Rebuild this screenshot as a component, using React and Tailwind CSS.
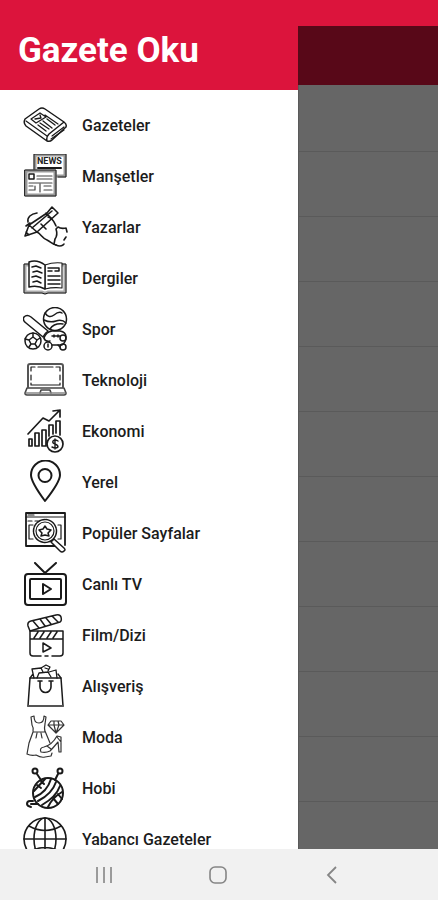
import React from "react";

function Icon({ children, width = 1.5, color = "#1a1a1a" }) {
  return (
    <svg
      viewBox="0 0 45 45"
      className="h-[45px] w-[45px] shrink-0"
      fill="none"
      stroke={color}
      strokeWidth={width}
      strokeLinecap="round"
      strokeLinejoin="round"
      aria-hidden="true"
    >
      {children}
    </svg>
  );
}

const NewspaperIcon = () => (
  <Icon>
    <path d="M24 38 3 23Q0 20 2 16L16 6q3-2 6 0L41 19q3 2 2 5L29 37q-2 2-5 1-1-4 2-7L41 19" />
    <path d="M3 18 24 33M29 33l12-9M28 36l13-9" strokeWidth="1.2" />
    <path d="m17 10-9 6 5 4 10-6zM12 16l6-1-1-3M22 12l13 9M24 16l8 6M20 18l9 7M17 20l9 6M15 22l8 6" strokeWidth="1.3" />
  </Icon>
);

const HeadlinesIcon = () => (
  <Icon>
    <path d="M12 16V1h30v21h-8" stroke="#999" strokeWidth="3" />
    <path d="M11 16V0h32v23h-8" strokeWidth="1" />
    <path d="M15 14h23" strokeWidth="2" />
    <text x="14" y="10" fontSize="9" fontWeight="700" fontFamily="Roboto, sans-serif" fill="#222" stroke="none">NEWS</text>
    <rect x="3" y="17" width="29" height="24" fill="#fff" stroke="#999" strokeWidth="3" />
    <rect x="2" y="16" width="31" height="26" strokeWidth="1" />
    <rect x="6" y="20" width="5" height="5" />
    <path d="M14 22h15M14 25h15M6 29h23M6 32h4M12 32v4H6M17 30v8M21 32h7M21 36h8" stroke="#444" strokeWidth="1.2" />
  </Icon>
);

const WriterIcon = () => (
  <Icon width={1.6}>
    <path d="M14 8C8 9 4 12 5 17M3 21l4-3M25 12c5 1 6 5 8 9M18 19l5 5M14 27c4 2 6 7 10 8 4 2 5 4 9 5" />
    <path d="m2 31 4-11L24 8l5-6 6 6-21 19zM6 20l8 7M9 23 29 6M23 8l6 6M3 27l3 3" />
    <path d="M43 23q-5 1-8-1l-2 2q2 6-1 10l-1 5M43 23l1 4M43 32l-2 3M33 40q4 2 7 0l1-1" />
  </Icon>
);

const BookIcon = () => (
  <Icon>
    <path d="M6 9H2v27h17q3 2 6 0h17V9h-4" stroke="#aaa" strokeWidth="3" />
    <path d="M6 8H1v29h18q3 2 6 0h18V8h-4" strokeWidth="1" />
    <path d="M22 9q8-3 17-2v25q-9-1-17 1z" fill="#fff" strokeWidth="1.1" />
    <path d="M6 6q8-3 16 3v24q-7-4-16-2z" fill="#fff" />
    <path d="m9 11 4-1 5 2M10 16l4-1 5 2M9 21l4-1 5 2M10 26l4-1 4 2M25 12h11v3h-4M25 15h4M25 20h12M25 24h12M25 28h12" />
  </Icon>
);

const SportIcon = () => (
  <Icon width={1.5}>
    <circle cx="32" cy="12" r="11.5" />
    <path d="M22 6q4 6 9 2t8-2M21 13q6 3 12 1t10 2M27 22q4-6 13-5" />
    <path d="M20 30 3 16q-4-3-2-6 3-3 7 0l17 14q-3 2-5 6z" />
    <circle cx="10" cy="34" r="8" />
    <path d="m10 30 4 3-2 4H8l-2-4zM10 26v4M14 33l3-2M12 37l2 3M8 37l-2 3M6 33l-4-1" />
    <path d="M21 31q2-6 8-7h8q6 1 6 6 0 5-4 8H29M29 29h8M31 28v2M35 28v2" />
    <circle cx="40" cy="31" r="3" />
    <circle cx="25" cy="39" r="4" />
    <circle cx="40" cy="40" r="3" />
    <path d="M21 31q1 4 6 3M25 37v3M35 38l2 2" />
  </Icon>
);

const LaptopIcon = () => (
  <Icon>
    <path d="M5 29V8q0-2 2-2h31q2 0 2 2v21" strokeWidth="2" stroke="#555" />
    <path d="M8 13V9h4M15 9h15M33 9h4v4M37 17v5M8 17v5M8 25v2h29v-2" strokeWidth="1.2" />
    <path d="M4 30h37l2 5q0 2-2 2H4q-2 0-2-2zM17 35l1-3h9l1 3" stroke="#444" strokeWidth="1.6" />
    <path d="M3 35h39" stroke="#888" />
  </Icon>
);

const EconomyIcon = () => (
  <Icon width={1.7}>
    <path d="M5 25 20 9l6 3L37 1M30 2l7-1v7" />
    <path d="M6 30h3v7H6zM12 24h4v13h-4zM19 21h4v16h-4zM26 27V16h4v9M33 24V12h4v14" />
    <circle cx="32" cy="35" r="8" fill="#fff" />
    <path d="M35 32q-3-2-5 0-1 2 2 3t3 3q-2 2-6 0M32 30v10" strokeWidth="1.4" />
  </Icon>
);

const PinIcon = () => (
  <Icon width={2}>
    <path d="M22 41Q8 22 8 15a14 14 0 0 1 29 0q0 7-15 26z" />
    <circle cx="22" cy="15.5" r="6.5" />
  </Icon>
);

const PopularIcon = () => (
  <Icon>
    <path d="M32 35H3V2h39v32" strokeWidth="1.8" />
    <path d="M3 6h39M5 4h6M5 10h4M12 10h3M10 14H6v14h4M35 14h3v14h-3" strokeWidth="1.2" />
    <circle cx="22" cy="20" r="11.5" fill="#fff" strokeDasharray="4 1" />
    <circle cx="22" cy="20" r="9" strokeWidth="1.2" />
    <path d="m22 15 2 3 4 1-3 3 1 3-4-1-4 1 1-3-3-3 4-1z" />
    <path d="m28 31 3-3 10 9q2 2 0 3-2 2-4 0z" fill="#fff" />
  </Icon>
);

const TvIcon = () => (
  <Icon width={2}>
    <path d="m12 1 10 10L33 1" />
    <rect x="2" y="12" width="41" height="31" rx="3" />
    <rect x="7" y="17" width="31" height="20" rx="1" />
    <path d="m20 22 8 5-8 5z" />
  </Icon>
);

const FilmIcon = () => (
  <Icon width={1.5}>
    <path d="M7 18 5 13q-1-4 3-5l25-6q4-1 5 2 1 4-1 5L7 18zM10 8l6 7M17 6l5 7M23 5l5 6M29 3l6 6" />
    <path d="M7 18h33v22q0 3-3 3h-8M18 43h-8q-3 0-3-3V18M22 43h3M7 26h33M11 25l4-6M17 25l4-6M24 25l4-6M30 25l4-6" />
    <path d="m20 30 8 5-8 4z" />
  </Icon>
);

const BagIcon = () => (
  <Icon>
    <path d="M7 14h31l2 28H5z" />
    <path d="M5 42h35" strokeWidth="2" stroke="#555" />
    <path d="M17 18v5a5.5 5.5 0 0 0 11 0v-5M15 17h4M26 17h4" strokeWidth="1.6" />
    <path d="m7 14 3-4M38 14l-3-4M11 14l-2-9 9-1 2 4M18 4l5-3 4 2-2 4M14 14l2-5 9-1 3 5M26 8l7-2 1 8M22 4l3 1" strokeWidth="1.3" />
  </Icon>
);

const FashionIcon = () => (
  <Icon width={1.2} color="#333">
    <path d="m8 2 1 8q2 3 1 7L6 28 4 39q4 2 9 1 5 3 9 2l6-1 1-3M8 2l3-1q0 7 5 7t5-7l2 1-1 7q-1 4 0 8M10 17h12M22 16l5 12M14 18l-1 5M18 18l1 5" />
    <path d="M28 6h10l3 4-8 8-8-8zM25 10h16M31 6v4l2 8 3-8-1-4" />
    <path d="M18 37q-2-4 3-5 8-2 13-11l4 1v15h-2l-1-10q-5 6-8 9-4 2-9 1zM24 31l4 3M34 22l4 5" />
  </Icon>
);

const YarnIcon = () => (
  <Icon width={2}>
    <circle cx="25" cy="27" r="15" />
    <circle cx="12" cy="5" r="2.5" />
    <circle cx="37" cy="5" r="2.5" />
    <path d="m14 8 4 6M35 8l-3 6M10 35H7q-3 0-3 3 0 2 4 3M8 38h7" />
    <path d="M11 25 22 13M12 31Q24 26 28 13M15 35q14-7 18-19M19 39q14-8 18-19M14 19l4 3M25 41q4-9 14-15M30 32l5 6M35 28l4 5M18 15l3 3" />
  </Icon>
);

const GlobeIcon = () => (
  <Icon width={1.6}>
    <circle cx="22" cy="22" r="21" />
    <ellipse cx="22" cy="22" rx="11" ry="21" />
    <path d="M22 1v42M1 22h42M6 9q16 9 32 0M6 35q16-9 32 0" />
  </Icon>
);

const sections = [
  ["Gazeteler", NewspaperIcon],
  ["Manşetler", HeadlinesIcon],
  ["Yazarlar", WriterIcon],
  ["Dergiler", BookIcon],
  ["Spor", SportIcon],
  ["Teknoloji", LaptopIcon],
  ["Ekonomi", EconomyIcon],
  ["Yerel", PinIcon],
  ["Popüler Sayfalar", PopularIcon],
  ["Canlı TV", TvIcon],
  ["Film/Dizi", FilmIcon],
  ["Alışveriş", BagIcon],
  ["Moda", FashionIcon],
  ["Hobi", YarnIcon],
  ["Yabancı Gazeteler", GlobeIcon],
];

function Drawer() {
  return (
    <aside className="flex w-[298px] shrink-0 flex-col bg-white">
      <header className="flex h-[90px] shrink-0 items-center bg-[#dc143c] px-[18px] pt-3">
        <h1 className="text-[35px] leading-10 font-bold text-white">Gazete Oku</h1>
      </header>
      <nav className="min-h-0 flex-1 overflow-hidden pt-[10px]">
        <ul>
          {sections.map(([label, Glyph]) => (
            <li key={label}>
              <a href="#" className="flex h-[51px] items-center gap-[14px] pl-[23px] text-[16px] leading-5 font-medium text-[#1c1c1c]">
                <Glyph />
                {label}
              </a>
            </li>
          ))}
        </ul>
      </nav>
    </aside>
  );
}

function DimmedPage() {
  return (
    <div className="flex min-w-0 flex-1 flex-col">
      <div className="h-[26px] shrink-0 bg-[#dc143c]" />
      <div className="h-[59px] shrink-0 bg-[#580818]" />
      <div className="min-h-0 flex-1 overflow-hidden border-l border-[#5a5a5a] bg-[#666] pt-[2px]">
        {Array.from({ length: 12 }, (_, i) => (
          <div key={i} className="h-[65px] border-b border-[#5a5a5a]" />
        ))}
      </div>
    </div>
  );
}

function SystemBar() {
  return (
    <footer className="flex h-[51px] shrink-0 items-center justify-center bg-[#f1f1f1] pr-[2px] text-[#858585]">
      <button aria-label="Recent apps" className="flex h-full w-[114px] items-center justify-center">
        <svg viewBox="0 0 18 18" className="h-[18px] w-[18px]" stroke="currentColor" strokeWidth="1.6">
          <path d="M2 1v16M9 1v16M16 1v16" />
        </svg>
      </button>
      <button aria-label="Home" className="flex h-full w-[114px] items-center justify-center">
        <svg viewBox="0 0 18 18" className="h-[18px] w-[18px]" fill="none" stroke="currentColor" strokeWidth="1.6">
          <rect x="1" y="1" width="16" height="16" rx="5" />
        </svg>
      </button>
      <button aria-label="Back" className="flex h-full w-[114px] items-center justify-center">
        <svg viewBox="0 0 18 18" className="h-[18px] w-[18px]" fill="none" stroke="currentColor" strokeWidth="1.8">
          <path d="M13 1 5 9l8 8" />
        </svg>
      </button>
    </footer>
  );
}

export default function App() {
  return (
    <div className="flex h-screen flex-col overflow-hidden bg-white font-[Roboto,sans-serif]">
      <main className="flex min-h-0 flex-1">
        <Drawer />
        <DimmedPage />
      </main>
      <SystemBar />
    </div>
  );
}
